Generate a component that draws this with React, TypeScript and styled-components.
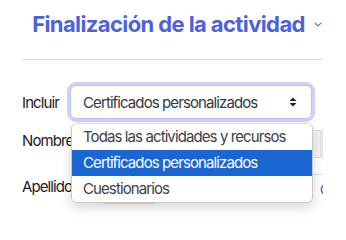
import React from "react";
import styled, { createGlobalStyle } from "styled-components";

const GlobalStyle = createGlobalStyle`
  html, body {
    margin: 0;
    padding: 0;
    background: #fff;
  }
  body {
    font-family: Inter, "Noto Sans", sans-serif;
    color: #1d2125;
  }
`;

const Page = styled.div`
  width: 346px;
  height: 224px;
  box-sizing: border-box;
  padding: 0 23px 0 22px;
  overflow: hidden;
`;

const Header = styled.div`
  display: flex;
  align-items: center;
  justify-content: center;
  gap: 9px;
  padding: 11px 0 0 9px;
  height: 26px;
`;

const Title = styled.h2`
  margin: 0;
  font-size: 22px;
  line-height: 26px;
  font-weight: 700;
  letter-spacing: -0.6px;
  color: #4d62d8;
  white-space: nowrap;
`;

const Divider = styled.hr`
  margin: 22px 0 0;
  border: 0;
  border-top: 1px solid #dddfe3;
`;

const FormRow = styled.div`
  display: flex;
  align-items: center;
  margin-top: 25px;
  height: 34px;
`;

const Label = styled.label<{ $line?: number }>`
  flex: 0 0 48px;
  font-size: 15px;
  line-height: ${(p) => (p.$line ? `${p.$line}px` : "normal")};
  letter-spacing: -0.9px;
  color: #1d2125;
  white-space: nowrap;
`;

const SelectWrap = styled.div`
  position: relative;
  width: 242px;
`;

const SelectBox = styled.div`
  box-sizing: border-box;
  height: 34px;
  display: flex;
  align-items: center;
  justify-content: space-between;
  padding: 0 14px 0 12px;
  border: 1px solid #b9c2f0;
  border-radius: 6px;
  box-shadow: 0 0 0 3px #cdd3f6;
  background: #fff;
  font-size: 15px;
  letter-spacing: -0.9px;
  color: #343a40;
`;

const Menu = styled.ul`
  position: absolute;
  top: 38px;
  left: 1px;
  width: 242px;
  margin: 0;
  padding: 0;
  list-style: none;
  background: #fff;
  border: 1px solid #c9c9c9;
  border-top-color: #dcdcdc;
  border-radius: 6px;
  box-shadow: 0 5px 12px rgba(0, 0, 0, 0.16);
  overflow: hidden;
  z-index: 2;
  box-sizing: border-box;
`;

const Option = styled.li<{ $selected?: boolean }>`
  height: 26px;
  line-height: 26px;
  padding-left: 11px;
  font-size: 15px;
  letter-spacing: -0.9px;
  white-space: nowrap;
  background: ${(p) => (p.$selected ? "#1a66d2" : "#fff")};
  color: ${(p) => (p.$selected ? "#fff" : "#3c4148")};
`;

const NameRow = styled.div<{ $top: number; $height: number }>`
  display: flex;
  align-items: flex-start;
  margin-top: ${(p) => p.$top}px;
  height: ${(p) => p.$height}px;
`;

const Letters = styled.div<{ $offset: number; $boxed?: boolean }>`
  display: flex;
  flex: 1 1 auto;
  height: 100%;
  margin-left: ${(p) => p.$offset}px;
  overflow: hidden;
  box-sizing: border-box;
  border-top: 1px solid #dedfe2;
  border-right: ${(p) => (p.$boxed ? "1px solid #dedfe2" : "none")};
`;

const Letter = styled.span<{ $w: number; $active?: boolean; $plain?: boolean }>`
  box-sizing: border-box;
  display: flex;
  align-items: center;
  justify-content: center;
  flex: 0 0 ${(p) => p.$w}px;
  height: 100%;
  font-size: 15px;
  color: ${(p) => (p.$active ? "#fff" : "#4d62d8")};
  background: ${(p) =>
    p.$active ? "#4d62d8" : p.$plain ? "transparent" : "#f3f3f4"};
  border-right: ${(p) => (p.$plain ? "none" : "1px solid #dedfe2")};
  border-bottom: ${(p) => (p.$plain ? "none" : "1px solid #dedfe2")};
`;

const SortIcon = () => (
  <svg width="8" height="10" viewBox="0 0 8 10" aria-hidden="true">
    <path d="M4 0.5 L7.5 4 H0.5 Z" fill="#222" />
    <path d="M4 9.5 L7.5 6 H0.5 Z" fill="#222" />
  </svg>
);

const Chevron = () => (
  <svg width="8" height="5" viewBox="0 0 8 5" aria-hidden="true">
    <path d="M0.8 0.8 L4 4 L7.2 0.8" fill="none" stroke="#5a6de0" strokeWidth="1.2" />
  </svg>
);

const options = [
  "Todas las actividades y recursos",
  "Certificados personalizados",
  "Cuestionarios",
];

const firstNameLetters = ["A", "B", "C", "D", "E", "F", "G"];
const lastNameLetters = ["A", "B", "C"];

export default function App() {
  return (
    <>
      <GlobalStyle />
      <Page>
        <Header>
          <Title>Finalización de la actividad</Title>
          <Chevron />
        </Header>
        <Divider />
        <FormRow>
          <Label>Incluir</Label>
          <SelectWrap>
            <SelectBox>
              <span>Certificados personalizados</span>
              <SortIcon />
            </SelectBox>
            <Menu>
              {options.map((o) => (
                <Option key={o} $selected={o === "Certificados personalizados"}>
                  {o}
                </Option>
              ))}
            </Menu>
          </SelectWrap>
        </FormRow>
        <NameRow $top={11} $height={28}>
          <Label $line={22}>Nombre</Label>
          <Letters $offset={4} $boxed>
            <Letter $w={58}>Todos</Letter>
            {firstNameLetters.map((l, i) => (
              <Letter key={l} $w={i < 6 ? 31 : 40}>
                {l}
              </Letter>
            ))}
          </Letters>
        </NameRow>
        <NameRow $top={16} $height={30}>
          <Label $line={26}>Apellido</Label>
          <Letters $offset={32}>
            <Letter $w={51} $active>
              Todos
            </Letter>
            {lastNameLetters.map((l, i) => (
              <Letter key={l} $w={i < 2 ? 80 : 20} $plain>
                {l}
              </Letter>
            ))}
          </Letters>
        </NameRow>
      </Page>
    </>
  );
}
